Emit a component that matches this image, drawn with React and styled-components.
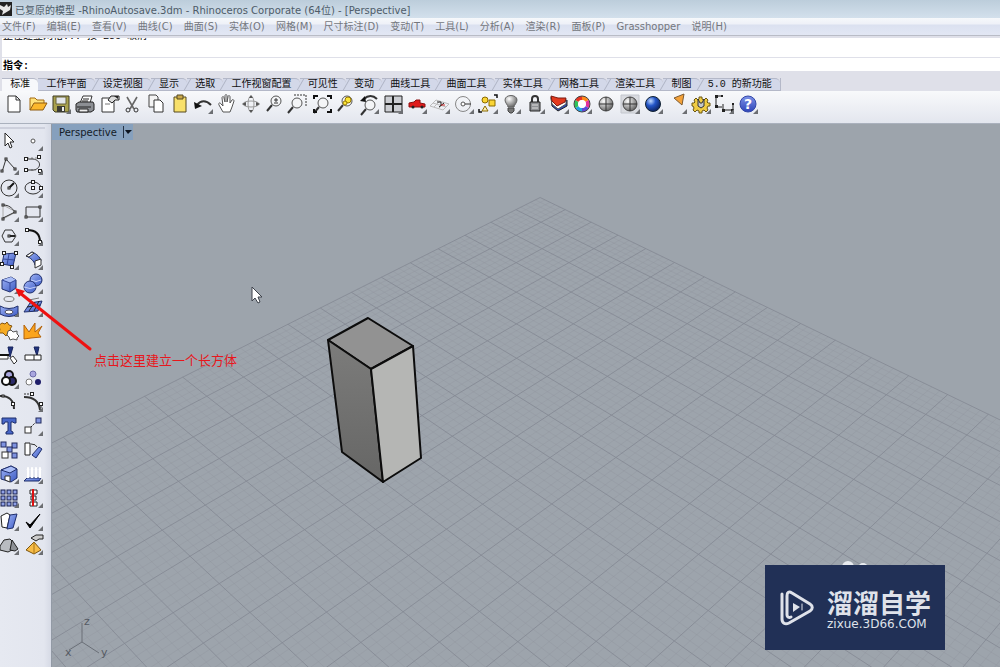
import React from 'react';
import styled, { createGlobalStyle } from 'styled-components';

const GlobalStyle = createGlobalStyle`
    body{
        margin:0;
        background:#dfe3ec;
    }
    *{
        box-sizing:border-box;
    }
    button, input{
        font:inherit;
        color:inherit;
        border:0;
        margin:0;
        padding:0;
        background:transparent;
    }
`
const uiFont = '"DejaVu Sans", "Noto Sans CJK SC", sans-serif'
const monoFont = '"Liberation Mono", "Noto Sans CJK SC", monospace'

const Window = styled.div`
    position:relative;
    display:flex;
    flex-direction:column;
    min-height:100vh;
    overflow:hidden;
    font-family:${uiFont};
    font-size:10px;
`
const TitleBar = styled.header`
    display:flex;
    align-items:center;
    gap:3px;
    height:18px;
    color:#4e5c69;
    background:linear-gradient(#bccddb, #d3e0ec);
    white-space:nowrap;
    h1{
        margin:0;
        font-size:10px;
        font-weight:normal;
    }
`
const MenuBar = styled.nav`
    height:18px;
    padding-left:2px;
    background:linear-gradient(#f6f8fb 0, #eef1f8 6px, #dbe1f0 7px, #e2e7f4);
    border-bottom:1px solid #b9bcc6;
`
const MenuList = styled.div`
    display:flex;
    justify-content:space-between;
    align-items:center;
    width:725px;
    height:17px;
    color:#74777d;
`
const MenuItem = styled.button`
    line-height:12px;
    white-space:nowrap;
`
const CommandArea = styled.section`
    padding:2px 0 7px 2px;
    background:#dfe0e9;
    font-family:${monoFont};
    color:#000;
`
const History = styled.div`
    height:19px;
    padding-left:1px;
    overflow:hidden;
    background:#fff;
    p{
        margin:-7px 0 0;
        line-height:12px;
    }
`
const Prompt = styled.div`
    display:flex;
    align-items:center;
    height:13px;
    margin-top:1px;
    padding-left:1px;
    background:#fff;
    label{
        font-weight:bold;
    }
    input{
        flex:1;
        outline:none;
        height:12px;
    }
`
const TabBar = styled.div`
    height:13px;
    padding-left:2px;
    background:#dfe0e9;
    font-family:${monoFont};
`
const Tabs = styled.div`
    display:flex;
    width:779px;
    height:13px;
    border-right:1px solid #b4b8c8;
`
const Tab = styled.button`
    position:relative;
    flex:1 1 auto;
    padding:0 7px;
    line-height:12px;
    white-space:nowrap;
    color:#111;
    background:${({ $active }) => $active ? '#f7f8fb' : '#d3d8e9'};
    border-top:1px solid #b4b8c8;
    border-bottom:1px solid ${({ $active }) => $active ? '#f7f8fb' : '#b4b8c8'};
    border-top-right-radius:5px;
    & + &::before{
        content:"";
        position:absolute;
        left:0;
        top:0;
        width:1px;
        height:11px;
        background:#aeb3c4;
        transform:skewX(-30deg);
    }
`
const Toolbar = styled.div`
    height:33px;
    padding:1px 0 0 2px;
    background:linear-gradient(#f8f9fb, #e3e6ee);
    border-bottom:1px solid #aab1bd;
`
const Tools = styled.div`
    display:grid;
    grid-template-columns:repeat(32, 1fr);
    grid-template-rows:24px;
    width:758px;
`
const ToolButton = styled.button`
    display:flex;
    justify-content:center;
    align-items:center;
    min-width:0;
    min-height:0;
    svg{
        flex:none;
        overflow:visible;
    }
`
const Main = styled.main`
    display:flex;
    flex:1;
`
const Sidebar = styled.aside`
    width:51px;
    flex:none;
    padding-top:3px;
    background:linear-gradient(90deg, #e6e9f1 0, #e3e6ef 44px, #d6dae5);
    &::before{
        content:"";
        display:block;
        width:45px;
        height:2px;
        background:#cdd0dc;
    }
`
const Palette = styled.div`
    display:grid;
    grid-template-columns:18px 30px;
    grid-template-rows:repeat(18, minmax(0, 1fr));
    height:428px;
`
const Viewport = styled.section`
    position:relative;
    flex:1;
    min-width:0;
    overflow:hidden;
    background:#9da4ac;
    border-left:1px solid #929aa5;
`
const Scene = styled.svg`
    position:absolute;
    left:0;
    top:0;
    width:100%;
    height:100%;
`
const ViewLabel = styled.button`
    position:relative;
    display:flex;
    align-items:center;
    gap:6px;
    height:16px;
    padding:0 1px 0 7px;
    color:#141c28;
    background:#86a0bd;
    span{
        height:12px;
        padding-top:4px;
        border-left:1px solid #263447;
    }
    svg{
        display:block;
    }
`
const Annotation = styled.div`
    position:absolute;
    left:0;
    top:280px;
    pointer-events:none;
    svg{
        position:absolute;
        left:0;
        top:0;
    }
    p{
        margin:71px 0 0 94px;
        font-size:13px;
        line-height:20px;
        color:#e8161c;
    }
`
const Badge = styled.div`
    position:absolute;
    right:55px;
    bottom:17px;
    display:flex;
    align-items:center;
    gap:12px;
    width:180px;
    height:85px;
    padding-left:14px;
    color:#dfe2ea;
    background:#213056;
    strong{
        display:block;
        font-family:"Noto Sans CJK SC", sans-serif;
        font-size:26px;
        line-height:32px;
    }
    small{
        display:block;
        font-size:12px;
        line-height:12px;
    }
`

const menus = ['文件(F)', '编辑(E)', '查看(V)', '曲线(C)', '曲面(S)', '实体(O)', '网格(M)', '尺寸标注(D)',
    '变动(T)', '工具(L)', '分析(A)', '渲染(R)', '面板(P)', 'Grasshopper', '说明(H)']

const tabs = ['标准', '工作平面', '设定视图', '显示', '选取', '工作视窗配置', '可见性', '变动',
    '曲线工具', '曲面工具', '实体工具', '网格工具', '渲染工具', '制图', '5.0 的新功能']

const line = { fill: 'none', stroke: '#333', strokeWidth: 1 }
const Node = ({ x, y, s = 3, fill = '#fff' }) => (
    <rect x={x - s / 2} y={y - s / 2} width={s} height={s} fill={fill} stroke="#222" />
)
const Lens = ({ x = 14, y = 9 }) => (
    <>
        <circle cx={x} cy={y} r="5" fill="#f4f5f7" stroke="#555" />
        <path d={`M${x - 4} ${y + 4}l-5 6`} stroke="#333" strokeWidth="2" />
    </>
)
const Globe = () => (
    <>
        <circle cx="12" cy="12" r="7" fill="url(#steel)" stroke="#444" />
        <path d="M12 5v14M5 12h14" {...line} />
    </>
)

// [label, has flyout, drawing]
const topTools = [
    ['新建', false, <path d="M6 4h8l4 4v12H6zM14 4v4h4" fill="#fff" stroke="#333" />],
    ['打开', false, <>
        <path d="M4 18V6h5l2 2h7v4" fill="#ffe27a" stroke="#a56a10" />
        <path d="M4 18l4-7h13l-4 7z" fill="#fbb72c" stroke="#8d5a10" />
    </>],
    ['保存', true, <>
        <path d="M4 4h16v16H6l-2-2z" fill="#a9a14e" stroke="#3d3b22" />
        <path d="M7 5h10v7H7z" fill="#e3e6ea" stroke="#67633a" />
        <path d="M8 14h8v6H8z" fill="#3c3c34" /><path d="M13 15h2v4h-2z" fill="#eee" />
    </>],
    ['打印', false, <>
        <path d="M7 11l3-7h9l-2 7z" fill="#fff" stroke="#333" />
        <path d="M3 12l3-2h14l1 2v6l-3 2H4l-1-2z" fill="#8c8f94" stroke="#222" />
        <path d="M4 15h14M10 7h6M9 9h6" stroke="#222" /><path d="M6 17h9v3H6z" fill="#eee" stroke="#222" />
    </>],
    ['属性', false, <>
        <path d="M5 6h12v14H5z" fill="#fff" stroke="#333" />
        <path d="M11 8l3-4h8v4h-4l-3 3z" fill="#ddd" stroke="#222" /><path d="M17 4h4v3" fill="#222" />
        <path d="M8 12h5" stroke="#777" />
    </>],
    ['剪切', false, <>
        <path d="M7 5l7 12M17 5l-7 12" stroke="#666" strokeWidth="1.6" fill="none" />
        <circle cx="8" cy="18" r="2" fill="none" stroke="#333" /><circle cx="16" cy="18" r="2" fill="none" stroke="#333" />
    </>],
    ['复制', false, <>
        <path d="M5 3h7l2 2v10H5z" fill="#f4f4f4" stroke="#444" /><path d="M10 8h6l3 3v9h-9z" fill="#fff" stroke="#333" />
    </>],
    ['粘贴', false, <>
        <path d="M6 5h12v15H6z" fill="#f8e06a" stroke="#554820" /><path d="M9 3h6v4H9z" fill="#caa84a" stroke="#554820" />
    </>],
    ['复原', true, <>
        <path d="M6 13c4-5 9-5 14 0" fill="none" stroke="#333" strokeWidth="2" /><path d="M3 10l1 7 7-3z" fill="#111" />
    </>],
    ['平移', false, <path d="M8 20l-4-7c-1-2 1-3 2-1l2 2-1-8c0-2 2-2 2 0l1 4V4c0-2 2-2 2 0v6l1-5c0-2 2-2 2 0v6l2-3c1-1 2 0 2 1l-2 6-2 5z" fill="#fff" stroke="#555" />],
    ['旋转视图', false, <>
        <ellipse cx="12" cy="12" rx="8" ry="3" {...line} stroke="#999" /><ellipse cx="12" cy="12" rx="3" ry="8" {...line} stroke="#999" />
        <path d="M3 12l4-2v4zM21 12l-4-2v4zM12 3l-2 3h4zM12 21l-2-3h4z" fill="#555" />
    </>],
    ['动态缩放', false, <><Lens /><path d="M12 8h4M14 6v4M12 11h4" {...line} /></>],
    ['框选缩放', false, <>
        <path d="M8 3h12v12" {...line} strokeDasharray="2 1" /><Lens x={11} y={11} />
    </>],
    ['缩放至最大范围', false, <>
        <Lens x={13} y={11} /><path d="M4 7V4h4M17 4h4v3M21 17v3h-4M4 17v3h3" {...line} stroke="#111" strokeWidth="2" />
    </>],
    ['缩放至选取物体', false, <><Lens /><circle cx="15" cy="8" r="3" fill="#fce63a" stroke="#977800" /><circle cx="12" cy="11" r="2" fill="#fce63a" stroke="#977800" /></>],
    ['复原视图', true, <>
        <Lens x={13} y={13} /><path d="M7 7c4-4 9-4 13 0" {...line} strokeWidth="2" /><path d="M3 9l5-5 1 6z" fill="#111" />
    </>],
    ['四个视图', true, <>
        <path d="M4 4h17v16H4z" fill="#ccced3" stroke="#222" /><path d="M12 4v16M4 12h17" stroke="#222" strokeWidth="2" />
    </>],
    ['指定视图', true, <>
        <path d="M4 11l5-1 2-2h4v3l5 1v3H4z" fill="#e01b1b" stroke="#8c1010" />
        <circle cx="8" cy="15" r="1.5" fill="#222" /><circle cx="17" cy="15" r="1.5" fill="#222" />
    </>],
    ['工作平面', true, <>
        <path d="M2 14l6-6 13 4-6 6zM5 11l13 4M6 15l6-6M10 17l6-6" {...line} stroke="#bbb" />
        <path d="M9 10h4v4M11 15l5-4" {...line} stroke="#222" /><path d="M13 13h4" stroke="#c22" />
    </>],
    ['物件锁点', true, <>
        <circle cx="11" cy="12" r="7.5" {...line} stroke="#888" /><path d="M11 12h8" stroke="#333" /><circle cx="11" cy="12" r="2" fill="#fff" stroke="#555" />
    </>],
    ['选取', true, <>
        <path d="M18 3h3v3M3 17v3h3" {...line} stroke="#111" strokeWidth="1.5" />
        <circle cx="9" cy="8" r="3" fill="#fad536" stroke="#8a6a00" /><path d="M13 8h6v6h-6z" fill="#fad536" stroke="#8a6a00" />
        <path d="M9 14l3 5H6z" fill="#fdf0b4" stroke="#8a6a00" />
    </>],
    ['显示与隐藏', true, <>
        <path d="M9 15c0-2-3-4-3-7 0-6 12-6 12 0 0 3-3 5-3 7z" fill="url(#steel)" stroke="#666" /><path d="M9 16h6v3l-2 2h-2l-2-2z" fill="#777" stroke="#444" />
    </>],
    ['锁定', true, <>
        <path d="M9 11V7c0-4 6-4 6 0v4" {...line} strokeWidth="2" /><path d="M7 10h10v9H7z" fill="#8f9195" stroke="#222" /><path d="M9 13h6M9 16h6" stroke="#ddd" />
    </>],
    ['图层', true, <>
        <path d="M4 5l1 9 6 5 9-5V8l-9 4z" fill="#2b4dbb" stroke="#222" /><path d="M4 6l1 6 6 5 8-5V8l-8 5z" fill="#fff" stroke="#555" />
        <path d="M4 4l7 2 8 0-1 4-8 4-5-5z" fill="#e43a1f" stroke="#7c1a10" />
    </>],
    ['属性颜色', true, <>
        <g fill="none" strokeWidth="4">
            <path d="M12 6a6 6 0 0 1 5 3" stroke="#ff8a1c" /><path d="M17 9a6 6 0 0 1 0 6" stroke="#e3309c" />
            <path d="M17 15a6 6 0 0 1-5 3" stroke="#5c49d8" /><path d="M12 18a6 6 0 0 1-5-3" stroke="#24a3e4" />
            <path d="M7 15a6 6 0 0 1 0-6" stroke="#2fc25b" /><path d="M7 9a6 6 0 0 1 5-3" stroke="#e63523" />
        </g>
        <circle cx="12" cy="12" r="8" {...line} stroke="#444" /><circle cx="12" cy="12" r="4" fill="#fff" />
    </>],
    ['着色', false, <Globe />],
    ['着色视图', true, <><path d="M3 3h18v18H3z" fill="#d9dbe0" stroke="#c3c6cd" /><Globe /></>],
    ['渲染', true, <circle cx="12" cy="12" r="7.5" fill="url(#ball)" stroke="#123" />],
    ['材质', true, <path d="M9 6l10-4-2 11z" fill="#f4a23a" stroke="#7c5a30" />],
    ['选项', true, <>
        <path d="M10 5h3v2l2 1 2-2 2 2-1 2 1 1h2v3h-2l-1 2 1 2-2 2-2-2-2 1v2h-3v-2l-2-1-2 2-2-2 1-2-1-2H3v-3h2l1-1-1-2 2-2 2 2 1-1z" fill="#f0cc43" stroke="#6a5614" />
        <path d="M9 7v7l3 2 3-2V7l-2 4h-2z" fill="#c5c8cc" stroke="#333" />
    </>],
    ['尺寸标注', true, <>
        <path d="M4 4v11M4 4h6M4 15h6M11 12v8M21 12v8M11 18h10" {...line} stroke="#222" />
        <path d="M3 3h3v3H3zM3 13h3v3H3zM9 3h2v2H9zM10 17h3v3h-3zM19 17h3v3h-3zM20 11h2v2h-2z" fill="#222" />
    </>],
    ['说明', true, <>
        <circle cx="12" cy="12" r="8" fill="url(#help)" stroke="#3447a8" />
        <text x="12" y="17" textAnchor="middle" fontSize="14" fontWeight="bold" fill="#fff">?</text>
    </>],
]

const blue = { fill: 'url(#cube)', stroke: '#1f2e6b' }
const Box3 = ({ x, y }) => <rect x={x} y={y} width="5" height="5" fill="#7f93e0" stroke="#222b5e" />

const sideTools = [
    ['选取', false, <path d="M8 4l9 9h-4l2 5-2 1-2-5-3 3z" fill="#fff" stroke="#222" />],
    ['点', true, <circle cx="12" cy="12" r="2" fill="#fff" stroke="#555" />],
    ['多重直线', true, <><path d="M5 19L9 6l9 10" {...line} /><Node x={5} y={18} s={2} /><Node x={9} y={6} s={2} /><Node x={18} y={16} s={2} /></>],
    ['控制点曲线', true, <>
        <path d="M6 5h12M6 17h9" {...line} strokeDasharray="2 2" stroke="#888" /><path d="M6 6h6c8 1 9 9 1 11H6" {...line} />
        <Node x={5} y={6} /><Node x={18} y={4} /><Node x={5} y={17} /><Node x={19} y={18} />
    </>],
    ['圆', true, <><circle cx="12" cy="12" r="8" {...line} /><path d="M12 12l5-5" stroke="#111" strokeWidth="2" /><Node x={12} y={12} s={2} /></>],
    ['椭圆', true, <><ellipse cx="12" cy="12" rx="8" ry="6" {...line} /><Node x={12} y={6} /><Node x={12} y={12} /><Node x={20} y={12} /></>],
    ['圆弧', true, <><path d="M6 5v14l13-7z" {...line} stroke="#aaa" /><path d="M6 5c6 0 9 3 12 7l-12 6" {...line} /><Node x={6} y={5} s={2} /><Node x={6} y={19} s={2} /><Node x={18} y={12} s={2} /></>],
    ['矩形', true, <><path d="M5 7h14v10H5z" {...line} /><Node x={5} y={17} s={2} /><Node x={19} y={7} s={2} /></>],
    ['多边形', true, <><path d="M5 12l3-6h7l4 6-4 6H8z" {...line} /><path d="M12 12h6" stroke="#222" strokeWidth="2" /><Node x={12} y={12} s={2} /></>],
    ['曲线圆角', true, <><path d="M6 6c8 0 13 3 13 12" {...line} stroke="#111" strokeWidth="2" /><Node x={6} y={6} /><Node x={19} y={18} /></>],
    ['曲面', true, <><path d="M7 6l12-1-3 13-11-2z" {...blue} /><path d="M12 6l-2 11M6 11l12 1" stroke="#33479a" /><Node x={7} y={5} /><Node x={19} y={5} /><Node x={5} y={16} /><Node x={15} y={19} /></>],
    ['曲面扫掠', true, <><path d="M5 8l6-4c5 2 8 5 9 9l-6 4c-1-4-4-7-9-9z" {...blue} /><path d="M5 8l6-4 2 1-5 4zM14 13l6-2v6l-6 3z" fill="#fff" stroke="#333" /></>],
    ['立方体', true, <>
        <path d="M5 8l9-3 5 3v8l-6 4-8-3z" {...blue} /><path d="M5 8l9-3 5 3-6 3z" fill="#a9bdf7" /><path d="M5 8l8 3 6-3M13 11v9" {...line} stroke="#33479a" />
    </>],
    ['布尔运算', true, <><circle cx="15" cy="8" r="6" {...blue} /><circle cx="9" cy="15" r="6" {...blue} /><path d="M3 15q6 3 12 0M10 8q5 3 10 0" {...line} stroke="#c3cffa" /></>],
    ['投影', true, <><ellipse cx="12" cy="4" rx="5" ry="2.5" {...line} stroke="#777" /><path d="M3 11q9 5 18 0v8q-9 5-18 0z" {...blue} /><ellipse cx="12" cy="17" rx="4" ry="2" fill="#fff" stroke="#445" /></>],
    ['网格', true, <><path d="M3 17l6-9 12-2-4 10z" {...blue} /><path d="M8 16l6-9M13 16l5-10M6 12l13-2" {...line} stroke="#222" /><path d="M8 5l10-2" stroke="#777" /></>],
    ['组合', false, <>
        <path d="M5 4l3 1 2-2 2 3 3 1-2 3 2 3-4 1-2 3-3-3-4 0 1-4-2-3z" fill="#f5ab24" stroke="#84550f" />
        <path d="M11 12l3-1 2 2 4-1v3l2 2-2 2v2l-4-1-3 1-1-3-2-2z" fill="#fff" stroke="#555" />
    </>],
    ['炸开', false, <path d="M3 20V6l5 7 6-9v9l7-6-4 7 3 4-10 1z" fill="#fba41c" stroke="#b3620a" />],
    ['修剪', false, <><path d="M11 4h5l-3 10z" fill="#21347f" stroke="#16225a" /><path d="M2 12h9v4H2zM13 15l3-2 4 5-3 3z" fill="#fff" stroke="#333" /><path d="M2 12h10" stroke="#111" strokeWidth="2" /></>],
    ['分割', false, <><path d="M13 4h5l-2 9z" fill="#21347f" stroke="#16225a" /><path d="M4 12h16v5H4zM13 12v5" fill="#fff" stroke="#222" /></>],
    ['群组', true, <><circle cx="12" cy="8" r="4" fill="#a9a6df" stroke="#111" strokeWidth="2" /><circle cx="15" cy="14" r="4" fill="#2c2b6a" stroke="#111" strokeWidth="2" /><circle cx="9" cy="14" r="4" fill="#fff" stroke="#111" strokeWidth="2" /></>],
    ['解散群组', false, <><circle cx="12" cy="7" r="3" fill="#a9a6df" stroke="#6b6aa8" /><circle cx="8" cy="15" r="3" fill="#fff" stroke="#777" /><circle cx="17" cy="15" r="3" fill="#1f1e6a" /></>],
    ['编辑点', false, <><path d="M3 6c9-1 14 5 14 13" {...line} strokeWidth="2" /><Node x={6} y={6} s={2} /><Node x={16} y={14} /></>],
    ['控制点', true, <><path d="M3 7c9 0 15 4 16 13" {...line} strokeWidth="2" /><path d="M3 4h9M20 13v5" {...line} strokeDasharray="2 1" /><Node x={11} y={4} /><Node x={20} y={14} /></>],
    ['文字', false, <path d="M5 4h14v5h-2l-1-1h-2v9l2 1v2H9v-2l2-1V8H8l-1 2H5z" fill="#4766c8" stroke="#1f2e6b" />],
    ['移动', true, <><rect x="4" y="13" width="6" height="6" fill="#fff" stroke="#333" /><path d="M10 13l4-4" stroke="#222" strokeDasharray="2 1" /><Box3 x={15} y={4} /></>],
    ['复制物件', false, <><Box3 x={4} y={4} /><Box3 x={15} y={5} /><Box3 x={10} y={9} /><Box3 x={15} y={15} /><rect x="5" y="14" width="6" height="6" fill="#fff" stroke="#333" /></>],
    ['旋转', false, <><path d="M4 5h5v12H4z" fill="#fff" stroke="#222" /><path d="M11 17l7-8 3 2-6 9z" {...blue} /><path d="M10 6q5 0 6 3" {...line} /></>],
    ['抽面', true, <><path d="M4 8l10-4 6 3v9l-6 4-10-3z" {...blue} /><path d="M4 8l10-4 6 3-7 4z" fill="#a9bdf7" stroke="#1f2e6b" /><path d="M8 14h5v6l-5-2z" fill="#fff" stroke="#333" /></>],
    ['挤出', true, <><path d="M3 19l3-3h14l-2 3z" {...blue} /><path d="M7 16V7M11 16V7M15 16V7M19 16V7" stroke="#fff" strokeWidth="2" /><path d="M6 8l1-3 1 3zM10 8l1-3 1 3zM14 8l1-3 1 3zM18 8l1-3 1 3z" fill="#fff" stroke="#fff" /></>],
    ['阵列', true, <>{[4, 10, 16].map(y => [4, 10, 16].map(x => <rect key={x + '-' + y} x={x} y={y} width="4" height="4" fill="#8fa0e6" stroke="#171f4c" />))}</>],
    ['对齐', true, <><path d="M9 4h7v4H9zM10 10h5v4h-5zM9 16h7v4H9z" fill="#fff" stroke="#222" /><path d="M12 3v17" stroke="#d11" strokeWidth="2" /></>],
    ['变形', true, <><path d="M4 7l6-3 3 2-3 13-5-1z" fill="#fff" stroke="#222" /><path d="M13 6l7-1-4 14-6 1z" {...blue} /></>],
    ['检查', true, <path d="M5 13l4 6L19 5l-10 11z" fill="#000" stroke="#000" />],
    ['实体编辑', true, <><path d="M3 13l4-6 6-1 2 2v9l-4 2-8-2z" fill="#b9bcc1" stroke="#222" /><path d="M15 7l6 9-3 2-5-1z" fill="#8e9196" stroke="#222" /></>],
    ['渲染工具', true, <><path d="M5 17l8-8 7 8-7 4z" fill="#f7bc47" stroke="#7a5512" /><path d="M13 9v12" stroke="#a87415" /><path d="M10 5l5-3h7v4h-4l-3 2z" fill="#ccc" stroke="#222" /></>],
]

function ToolIcon({ tool }) {
    const [label, flyout, drawing] = tool
    return (
        <ToolButton type="button" aria-label={label}>
            <svg width="24" height="24" viewBox="0 0 24 24">
                {drawing}
                {flyout && <path d="M17 22h5v-5z" fill="#6c6e72" />}
            </svg>
        </ToolButton>
    )
}

// ground plane (i, j) to view coordinates
function project(i, j) {
    const w = 1 - 0.01635 * i - 0.01679 * j
    return [(540.1 + 15.86 * i - 32.85 * j) / w, (197.5 + 8.71 * i + 8.64 * j) / w]
}

function gridPath(major) {
    let d = ''
    for (let n = 0; n <= 120; n++) {
        if ((n % 5 === 0) !== major) continue
        const k = n / 5
        d += 'M' + project(k, 0) + 'L' + project(k, 24)
        d += 'M' + project(0, k) + 'L' + project(24, k)
    }
    return d
}

function PerspectiveScene() {
    return (
        <Scene viewBox="52 124 948 543" preserveAspectRatio="xMinYMin slice">
            <path d={gridPath(false)} fill="none" stroke="#8d939c" strokeWidth="1" opacity="0.3" />
            <path d={gridPath(true)} fill="none" stroke="#858a94" strokeWidth="1" opacity="0.85" />
            <g stroke="#0c0c0c" strokeWidth="2" strokeLinejoin="round">
                <path d="M328 340L368 318L413 346L371 369Z" fill="#929292" />
                <path d="M328 340L371 369L383 482L342 452Z" fill="url(#side)" />
                <path d="M371 369L413 346L421 458L383 482Z" fill="#b5b6b4" />
            </g>
            <path d="M82 623V642L69 650M82 642L99 653" fill="none" stroke="#6a6f77" />
            <g fontSize="11" fill="#555a63">
                <text x="84" y="625">z</text>
                <text x="65" y="656">x</text>
                <text x="101" y="656">y</text>
            </g>
            <path d="M252 287v14l3-3 3 5 2-1-2-5h4z" fill="#fff" stroke="#3c414a" />
            <g fill="#e8ebef">
                <circle cx="848" cy="567" r="6" />
                <circle cx="863" cy="568" r="5" />
            </g>
        </Scene>
    )
}

function Gradients() {
    return (
        <svg width="0" height="0" style={{ position: 'absolute' }} aria-hidden="true">
            <defs>
                <radialGradient id="steel" cx="0.35" cy="0.3" r="0.8">
                    <stop offset="0" stopColor="#fff" /><stop offset="1" stopColor="#555" />
                </radialGradient>
                <radialGradient id="ball" cx="0.35" cy="0.3" r="0.8">
                    <stop offset="0" stopColor="#c4dcff" /><stop offset="0.4" stopColor="#2456c8" /><stop offset="1" stopColor="#08194f" />
                </radialGradient>
                <linearGradient id="help" x2="0" y2="1">
                    <stop offset="0" stopColor="#7d93e8" /><stop offset="1" stopColor="#2e44b8" />
                </linearGradient>
                <linearGradient id="cube" x2="1" y2="1">
                    <stop offset="0" stopColor="#9db2f5" /><stop offset="1" stopColor="#3d5bc4" />
                </linearGradient>
                <linearGradient id="side" x2="0" y2="1">
                    <stop offset="0" stopColor="#7c7c7b" /><stop offset="1" stopColor="#666665" />
                </linearGradient>
            </defs>
        </svg>
    )
}

export default function App() {
    return (
        <Window>
            <GlobalStyle />
            <Gradients />
            <TitleBar>
                <svg width="12" height="14" viewBox="0 0 12 14">
                    <path d="M0 0h12v14H0z" fill="#222" />
                    <path d="M0 3l4 2 3-3 1 3 3-2-1 5-5 3-3 2 1-4-3-2z" fill="#e8e8e8" />
                </svg>
                <h1>已复原的模型 -RhinoAutosave.3dm - Rhinoceros Corporate (64位) - [Perspective]</h1>
            </TitleBar>
            <MenuBar>
                <MenuList>
                    {menus.map(item => <MenuItem key={item} type="button">{item}</MenuItem>)}
                </MenuList>
            </MenuBar>
            <CommandArea>
                <History><p>正在建立网格... 按 Esc 取消</p></History>
                <Prompt>
                    <label htmlFor="command">指令:</label>
                    <input id="command" type="text" />
                </Prompt>
            </CommandArea>
            <TabBar>
                <Tabs role="tablist">
                    {tabs.map((tab, i) => (
                        <Tab key={tab} type="button" role="tab" aria-selected={i === 0} $active={i === 0}>{tab}</Tab>
                    ))}
                </Tabs>
            </TabBar>
            <Toolbar>
                <Tools>
                    {topTools.map(tool => <ToolIcon key={tool[0]} tool={tool} />)}
                </Tools>
            </Toolbar>
            <Main>
                <Sidebar>
                    <Palette>
                        {sideTools.map(tool => <ToolIcon key={tool[0]} tool={tool} />)}
                    </Palette>
                </Sidebar>
                <Viewport>
                    <PerspectiveScene />
                    <ViewLabel type="button">
                        Perspective
                        <span>
                            <svg width="8" height="5" viewBox="0 0 8 5"><path d="M1 0h7L4 4z" fill="#0d1420" /></svg>
                        </span>
                    </ViewLabel>
                    <Badge>
                        <svg width="36" height="38" viewBox="0 0 36 38" fill="none" stroke="#dfe2ea" strokeWidth="3" strokeLinecap="round" strokeLinejoin="round">
                            <path d="M3 5v25c0 4 3 6 7 4l21-12c3-2 3-5 0-7L13 4C10 2 8 3 8 7v19c0 2 2 3 4 2" />
                            <path d="M14 14v9l7-5z" fill="#dfe2ea" stroke="none" />
                            <path d="M23 15v6" strokeWidth="1" />
                        </svg>
                        <div>
                            <strong>溜溜自学</strong>
                            <small>zixue.3D66.COM</small>
                        </div>
                    </Badge>
                </Viewport>
            </Main>
            <Annotation>
                <svg width="100" height="80" viewBox="0 0 100 80">
                    <path d="M20 13L90 69" stroke="#ee1111" strokeWidth="3" strokeLinecap="round" />
                    <path d="M15 8l10 3-6 6z" fill="#ee1111" />
                </svg>
                <p>点击这里建立一个长方体</p>
            </Annotation>
        </Window>
    )
}
